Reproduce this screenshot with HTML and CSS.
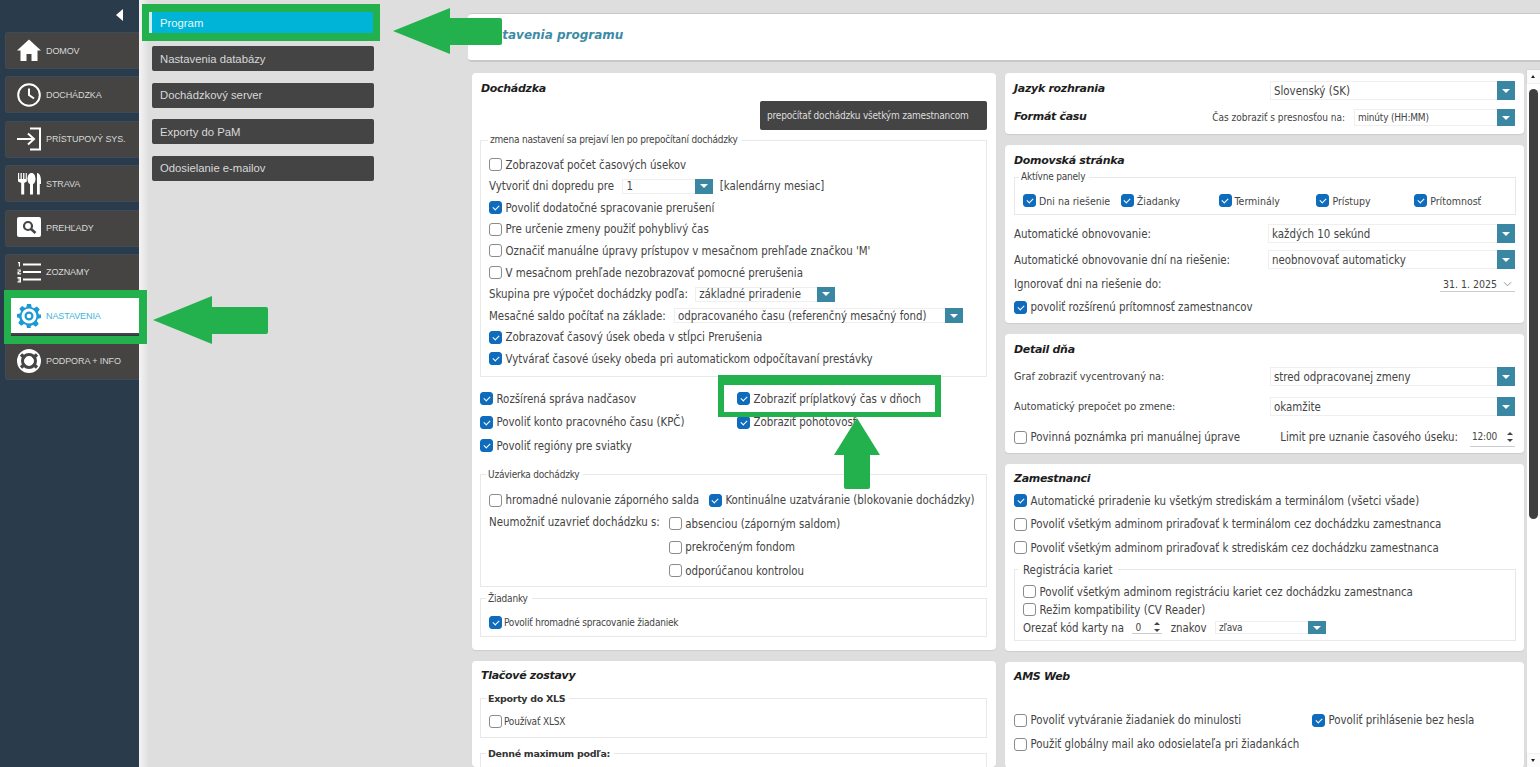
FILE: index.html
```html
<!DOCTYPE html>
<html lang="sk">
<head>
<meta charset="utf-8">
<title>Nastavenia programu</title>
<link rel="stylesheet" href="styles.css">
</head>
<body>
<div class="app">
  <aside class="sidebar">
    <div class="collapse"><span class="collapse-tri"></span></div>
    <nav class="nav">
      <a class="nav-item"><svg class="ico" viewBox="0 0 24 24"><path fill="#fff" d="M12 .5 24 11.5h-3.5V22H14.500v-7h-5v7H3.500V11.500H0z"/></svg><span>DOMOV</span></a>
      <a class="nav-item"><svg class="ico" viewBox="0 0 24 24"><circle cx="12" cy="12" r="10.800" fill="none" stroke="#fff" stroke-width="2"/><path d="M12 5.500V12l5 3.500" fill="none" stroke="#fff" stroke-width="2"/></svg><span>DOCHÁDZKA</span></a>
      <a class="nav-item"><svg class="ico" viewBox="0 0 24 24"><path d="M13 1.500h10v21H13M0 12h16" fill="none" stroke="#fff" stroke-width="2"/><path d="M11 6.500 17 12l-6 5.500" fill="none" stroke="#fff" stroke-width="2"/></svg><span>PRÍSTUPOVÝ SYS.</span></a>
      <a class="nav-item"><svg class="ico" viewBox="0 0 24 24"><path fill="#fff" d="M1 1h1.200v6h1.300V1h1.300v6h1.300V1h1.300v6h1.300V1H9.800v8.500L7.200 11v11.500h-3V11L1 9.500zM14.500 1c2.500 0 4 2.600 4 6 0 2.700-1 4.500-2.500 5v10.500h-3V12c-1.500-.5-2.500-2.300-2.500-5 0-3.400 1.500-6 4-6zM20 1c2.500 0 4 3 4 8v3h-1.200v10.500H20z"/></svg><span>STRAVA</span></a>
      <a class="nav-item"><svg class="ico" viewBox="0 0 24 24"><rect y="1" width="24" height="20" rx="2" fill="#fff"/><circle cx="11" cy="10" r="4" fill="none" stroke="#454545" stroke-width="2.200"/><path d="m14 13 4.500 4" stroke="#454545" stroke-width="2.600"/></svg><span>PREHĽADY</span></a>
      <a class="nav-item"><svg class="ico" viewBox="0 0 24 24"><path d="M6 4.500h18M6 12h18M6 19.500h18" stroke="#fff" stroke-width="2"/><path d="M1 2h2v4.500H1.800V3.200H1zM.5 9.500h3.200v2.800H2v1H4v1.200H.5V11.500h2v-1H.5zM.5 17h3.500v5.500H.5v-1.200h2.200v-.8H1.200v-1h1.500v-.8H.5z" fill="#fff"/></svg><span>ZOZNAMY</span></a>
      <a class="nav-item active"><svg class="ico" viewBox="0 0 24 24"><path fill="#1b9ad6" fill-rule="evenodd" d="M10 0h4l.7 3.300 2.300 1 2.900-1.800 2.800 2.800-1.800 2.900 1 2.300L24 10.500v3.500l-3.100.7-1 2.300 1.800 2.900-2.800 2.800-2.900-1.800-2.300 1L13.800 24h-3.800l-.7-3.100-2.300-1-2.900 1.800-2.800-2.800L3.100 16l-1-2.300L0 13.500v-3.500l3.100-.5 1-2.300L2.300 4.800l2.800-2.800L8 3.800l1.300-.5zm2 4.500a7.500 7.500 0 1 0 0 15 7.500 7.500 0 0 0 0-15z"/><circle cx="12" cy="12" r="3.400" fill="none" stroke="#1b9ad6" stroke-width="2.200"/></svg><span>NASTAVENIA</span></a>
      <a class="nav-item"><svg class="ico" viewBox="0 0 24 24"><circle cx="12" cy="12" r="12" fill="#fff"/><circle cx="12" cy="12" r="6.500" fill="none" stroke="#454545" stroke-width="3"/><path d="M4 5.500 8 9M20 5.500 16 9M4 18.500 8 15M20 18.500 16 15" stroke="#454545" stroke-width="3.500"/><circle cx="12" cy="12" r="3" fill="#fff"/></svg><span>PODPORA + INFO</span></a>
    </nav>
  </aside>

  <div class="submenu">
    <a class="sub-item current">Program</a>
    <a class="sub-item">Nastavenia databázy</a>
    <a class="sub-item">Dochádzkový server</a>
    <a class="sub-item">Exporty do PaM</a>
    <a class="sub-item">Odosielanie e-mailov</a>
  </div>

  <main class="main">
    <header class="title-bar"><h1>Nastavenia programu</h1></header>
    <div class="content">
      <div class="col col-left">
        <section class="card card-doch">
          <h2>Dochádzka</h2>
          <div class="btn-row"><button class="btn">prepočítať dochádzku všetkým zamestnancom</button></div>
          <fieldset class="fs fs-calc">
            <legend class="small">zmena nastavení sa prejaví len po prepočítaní dochádzky</legend>
            <label class="row"><input type="checkbox">Zobrazovať počet časových úsekov</label>
            <div class="row">Vytvoriť dni dopredu pre <div class="sel sel-days"><span>1</span><i></i></div> [kalendárny mesiac]</div>
            <label class="row"><input type="checkbox" checked>Povoliť dodatočné spracovanie prerušení</label>
            <label class="row"><input type="checkbox">Pre určenie zmeny použiť pohyblivý čas</label>
            <label class="row"><input type="checkbox">Označiť manuálne úpravy prístupov v mesačnom prehľade značkou 'M'</label>
            <label class="row"><input type="checkbox">V mesačnom prehľade nezobrazovať pomocné prerušenia</label>
            <div class="row">Skupina pre výpočet dochádzky podľa: <div class="sel sel-group"><span>základné priradenie</span><i></i></div></div>
            <div class="row">Mesačné saldo počítať na základe: <div class="sel sel-saldo"><span>odpracovaného času (referenčný mesačný fond)</span><i></i></div></div>
            <label class="row"><input type="checkbox" checked>Zobrazovať časový úsek obeda v stĺpci Prerušenia</label>
            <label class="row"><input type="checkbox" checked>Vytvárať časové úseky obeda pri automatickom odpočítavaní prestávky</label>
          </fieldset>
          <div class="opts">
            <label class="row"><input type="checkbox" checked>Rozšírená správa nadčasov</label>
            <label class="row"><input type="checkbox" checked>Zobraziť príplatkový čas v dňoch</label>
            <label class="row"><input type="checkbox" checked>Povoliť konto pracovného času (KPČ)</label>
            <label class="row"><input type="checkbox" checked>Zobraziť pohotovosť</label>
            <label class="row"><input type="checkbox" checked>Povoliť regióny pre sviatky</label>
          </div>
          <fieldset class="fs fs-close">
            <legend class="small">Uzávierka dochádzky</legend>
            <div class="row-close">
              <label class="row"><input type="checkbox">hromadné nulovanie záporného salda</label>
              <label class="row"><input type="checkbox" checked>Kontinuálne uzatváranie (blokovanie dochádzky)</label>
            </div>
            <div class="deny">
              <span class="deny-label">Neumožniť uzavrieť dochádzku s:</span>
              <div class="deny-list">
                <label class="row"><input type="checkbox">absenciou (záporným saldom)</label>
                <label class="row"><input type="checkbox">prekročeným fondom</label>
                <label class="row"><input type="checkbox">odporúčanou kontrolou</label>
              </div>
            </div>
          </fieldset>
          <fieldset class="fs fs-req">
            <legend class="small">Žiadanky</legend>
            <label class="row small"><input type="checkbox" checked>Povoliť hromadné spracovanie žiadaniek</label>
          </fieldset>
        </section>
        <section class="card card-print">
          <h2>Tlačové zostavy</h2>
          <fieldset class="fs fs-xls">
            <legend class="bold-legend">Exporty do XLS</legend>
            <label class="row small"><input type="checkbox">Používať XLSX</label>
          </fieldset>
          <fieldset class="fs fs-max">
            <legend class="bold-legend">Denné maximum podľa:</legend>
          </fieldset>
        </section>
      </div>

      <div class="col col-right">
        <section class="card card-lang">
          <div class="line line-lang"><h2>Jazyk rozhrania</h2><div class="sel sel-lang"><span>Slovenský (SK)</span><i></i></div></div>
          <div class="line line-time"><h2>Formát času</h2><span class="label-time push">Čas zobraziť s presnosťou na:</span><div class="sel sel-time small"><span>minúty (HH:MM)</span><i></i></div></div>
        </section>
        <section class="card card-home">
          <h2>Domovská stránka</h2>
          <fieldset class="fs fs-panels">
            <legend class="small">Aktívne panely</legend>
            <div class="panels">
              <label class="row"><input type="checkbox" checked>Dni na riešenie</label>
              <label class="row"><input type="checkbox" checked>Žiadanky</label>
              <label class="row"><input type="checkbox" checked>Terminály</label>
              <label class="row"><input type="checkbox" checked>Prístupy</label>
              <label class="row"><input type="checkbox" checked>Prítomnosť</label>
            </div>
          </fieldset>
          <div class="line line-a"><span>Automatické obnovovanie:</span><div class="sel sel-auto"><span>každých 10 sekúnd</span><i></i></div></div>
          <div class="line line-a"><span>Automatické obnovovanie dní na riešenie:</span><div class="sel sel-auto"><span>neobnovovať automaticky</span><i></i></div></div>
          <div class="line line-d"><span>Ignorovať dni na riešenie do:</span><div class="date"><span>31. 1. 2025</span><svg viewBox="0 0 10 6"><path d="M1 1l4 4 4-4" fill="none" stroke="#888"/></svg></div></div>
          <label class="row"><input type="checkbox" checked>povoliť rozšírenú prítomnosť zamestnancov</label>
        </section>
        <section class="card card-day">
          <h2>Detail dňa</h2>
          <div class="line line-b"><span class="label-day">Graf zobraziť vycentrovaný na:</span><div class="sel sel-lang"><span>stred odpracovanej zmeny</span><i></i></div></div>
          <div class="line line-b"><span class="label-day">Automatický prepočet po zmene:</span><div class="sel sel-lang"><span>okamžite</span><i></i></div></div>
          <div class="line line-c"><label class="row"><input type="checkbox">Povinná poznámka pri manuálnej úprave</label><span class="push">Limit pre uznanie časového úseku:</span><div class="spin spin-time small"><span>12:00</span><b></b></div></div>
        </section>
        <section class="card card-emp">
          <h2>Zamestnanci</h2>
          <label class="row"><input type="checkbox" checked>Automatické priradenie ku všetkým strediskám a terminálom (všetci všade)</label>
          <label class="row"><input type="checkbox">Povoliť všetkým adminom priraďovať k terminálom cez dochádzku zamestnanca</label>
          <label class="row"><input type="checkbox">Povoliť všetkým adminom priraďovať k strediskám cez dochádzku zamestnanca</label>
          <fieldset class="fs fs-cards">
            <legend>Registrácia kariet</legend>
            <label class="row"><input type="checkbox">Povoliť všetkým adminom registráciu kariet cez dochádzku zamestnanca</label>
            <label class="row"><input type="checkbox">Režim kompatibility (CV Reader)</label>
            <div class="row">Orezať kód karty na <div class="spin spin-num small"><span>0</span><b></b></div> znakov <div class="sel sel-side small"><span>zľava</span><i></i></div></div>
          </fieldset>
        </section>
        <section class="card card-ams">
          <h2>AMS Web</h2>
          <div class="ams-grid">
            <label class="row"><input type="checkbox">Povoliť vytváranie žiadaniek do minulosti</label>
            <label class="row"><input type="checkbox" checked>Povoliť prihlásenie bez hesla</label>
            <label class="row"><input type="checkbox">Použiť globálny mail ako odosielateľa pri žiadankách</label>
          </div>
        </section>
      </div>

      <div class="scrollbar">
        <span class="sb-btn up"></span>
        <span class="sb-track"><span class="sb-thumb"></span></span>
        <span class="sb-btn down"></span>
      </div>
    </div>
  </main>

  <div class="hl hl-program"></div>
  <div class="hl hl-settings"></div>
  <div class="hl hl-option"></div>
  <svg class="arrow arrow-a" viewBox="0 0 110 48"><path d="M1 24 58 1v10h50q2 0 2 2v23q0 2-2 2H58v9z"/></svg>
  <svg class="arrow arrow-b" viewBox="0 0 116 50"><path d="M1 25 60 1v11h54q2 0 2 2v23q0 2-2 2H60v10z"/></svg>
  <svg class="arrow arrow-c" viewBox="0 0 48 72"><path d="M24 1 47 38H37v32q0 2-2 2H13q-2 0-2-2V38H1z"/></svg>
</div>
</body>
</html>
```

FILE: styles.css
```css
* { box-sizing: border-box; }
html, body { margin: 0; height: 100%; overflow: hidden; }
body { font: 11.400px "DejaVu Sans Condensed", "DejaVu Sans", sans-serif; color: #444; background: #dedede; }
a { display: flex; }
.app { position: relative; display: flex; width: 1540px; height: 767px; overflow: hidden; }

/* sidebar */
.sidebar { width: 139px; flex: none; background: #2a3b4b; padding-left: 5px; }
.collapse { height: 32px; display: flex; justify-content: flex-end; padding: 9px 16px 0 0; }
.collapse-tri { width: 0; height: 0; border-style: solid; border-width: 6px 7px 6px 0; border-color: transparent #fff transparent transparent; }
.nav { display: flex; flex-direction: column; gap: 7.400px; }
.nav-item { height: 37px; align-items: center; gap: 5px; padding-left: 11px; background: #454443; border: 1px solid #3c4c5a; border-right: 0; border-radius: 3px 0 0 3px; font: 9px "Liberation Sans", sans-serif; letter-spacing: -.1px; color: #d8d8d8; }
.nav-item.active { background: #fff; color: #3fb3dc; border: 0; border-bottom: 2px solid #444; border-radius: 0; padding-left: 12px; }
.ico { width: 24px; height: 24px; flex: none; }

/* submenu */
.submenu { width: 329px; flex: none; padding: 12px 0 0 13px; display: flex; flex-direction: column; gap: 11.400px; background: linear-gradient(90deg, #f4f4f4, #dedede 10px); font: 11.300px "Liberation Sans", sans-serif; }
.sub-item { width: 222px; height: 25px; align-items: center; padding-left: 8px; background: #444; color: #d8d8d8; border-radius: 2px; }
.sub-item.current { height: 22px; margin-left: -3px; width: 224px; padding-left: 8px; background: #00b4d8; border-left: 3px solid #cdeef5; border-radius: 0; color: #e8f8fb; margin-bottom: 1px; }

/* main */
.main { flex: 1; min-width: 0; padding-top: 13px; }
.title-bar { height: 49px; background: #fff; border-top: 1px solid #c8c8c8; border-bottom: 2px solid #c8c8c8; border-radius: 4px 0 0 4px; padding: 14px 0 0 9px; }
h1 { margin: 0; font: italic bold 12px "DejaVu Sans", sans-serif; color: #3d8ba6; }
.content { display: flex; padding: 11px 0 0 4px; align-items: flex-start; }
.col { flex: none; display: flex; flex-direction: column; gap: 11px; }
.col-left { width: 524px; }
.col-right { width: 519px; margin-left: 9px; }
.card { background: #fff; border-radius: 4px; padding: 8px 9px 0 8px; box-shadow: 0 1px 1px #ccc; }
.col-right .card { padding-left: 9px; }
h2 { margin: 0; padding-left: 1px; font: italic bold 11px "DejaVu Sans", sans-serif; letter-spacing: -.3px; color: #1d1d1d; height: 14px; line-height: 14px; }
.col-right h2 { padding-left: 0; }

/* form bits */
.row { display: flex; align-items: center; height: 21.550px; white-space: pre; }
input[type=checkbox] { appearance: none; width: 13px; height: 13px; margin: 0 3.500px 0 0; flex: none; border: 1px solid #8b8b8b; border-radius: 3px; background: #fff; position: relative; }
input[type=checkbox]:checked { background: #0f6cbd; border-color: #0f6cbd; }
input[type=checkbox]:checked::after { content: ""; position: absolute; left: 3.500px; top: 2px; width: 3px; height: 5px; border: solid #fff; border-width: 0 1.300px 1.300px 0; transform: rotate(45deg); }
.small { font-size: 10px; letter-spacing: -.2px; }
.small input[type=checkbox] { margin-right: 2px; }
.label-time { font-size: 10px; }
.label-day { font-size: 10.800px; }
.fs { margin: 0; border: 1px solid #e8e8e8; padding: 0 8px; min-width: 0; }
legend { padding: 0 4px 0 2px; line-height: 14px; }
.fs-close legend, .fs-req legend, .fs-xls legend, .fs-max legend { margin-left: -3px; }
.fs-calc legend { margin-left: -1px; }
.fs-panels legend { margin-left: -4px; }
.bold-legend { font: bold 9.500px "DejaVu Sans", sans-serif; color: #333; letter-spacing: -.3px; }
.sel { display: flex; height: 15px; align-items: center; background: #fff; border: 1px solid #efefef; border-right: 0; padding-left: 3px; margin: 0 3px; white-space: pre; }
.sel span { flex: 1; overflow: hidden; }
.sel i { width: 18px; align-self: stretch; margin: -1px 0; background: #3a87a3; position: relative; flex: none; }
.sel i::after { content: ""; position: absolute; left: 5px; top: calc(50% - 2px); border-style: solid; border-width: 4px 4px 0; border-color: #fff transparent transparent; }
.sel-days { width: 91px; margin-left: 5px; }
.sel-group { width: 140px; margin-left: 4px; }
.sel-saldo { width: 289px; margin-left: 5px; }
.spin { display: flex; align-items: center; border-bottom: 1px solid #ccc; }
.spin span { flex: 1; }
.spin b { width: 9px; height: 14px; position: relative; flex: none; }
.spin b::before, .spin b::after { content: ""; position: absolute; left: 1px; border-style: solid; border-color: #444 transparent; }
.spin b::before { top: 2px; border-width: 0 3px 3px; }
.spin b::after { bottom: 2px; border-width: 3px 3px 0; }

/* left col */
.card-doch { height: 577px; padding-top: 9px; }
.btn-row { display: flex; justify-content: flex-end; margin-top: 5px; }
.btn { width: 227px; height: 29px; border: 0; padding: 0 0 0 7px; text-align: left; background: #444; color: #ddd; border-radius: 2px; font: 10px "DejaVu Sans Condensed", sans-serif; letter-spacing: -.2px; }
.fs-calc { margin-top: 3px; height: 244px; padding-top: 7px; }
.opts { display: grid; grid-template-columns: 257px 1fr; grid-auto-rows: 23.500px; margin-top: 10px; }
.opts .row { height: 23.500px; }
.fs-close { margin-top: 10px; height: 119px; padding-top: 7px; }
.row-close { display: flex; gap: 10px; }
.row-close .row { height: 23.500px; }
.deny { display: flex; }
.deny-label { margin: 3px 9px 0 0; }
.deny-list .row { height: 23.500px; }
.fs-req { margin-top: 5px; height: 45px; padding-top: 6px; }
.fs-req .row, .fs-xls .row { height: 21px; }
.card-print { height: 106px; overflow: hidden; }
.fs-xls { margin-top: 10px; height: 45px; padding-top: 7px; }
.fs-max { margin-top: 10px; height: 60px; }

/* right col */
.line { display: flex; align-items: center; }
.line-lang { height: 19px; }
.line-lang h2 { flex: none; margin-bottom: 4px; }
.line-time h2 { flex: none; margin-bottom: 2px; }
.line-time { height: 17px; margin-top: 9px; }
.push { margin-left: auto; }
.card-lang { height: 61px; }
.card-lang .sel, .line-b .sel { margin: 0 0 0 auto; height: 19px; }
.sel-lang { width: 245px; }
.sel-time { width: 161px; height: 17px !important; margin-left: 9px !important; }
.sel-auto { width: 247px; margin: 0 0 0 auto; height: 19px; padding-left: 3px; }
.card-home { height: 178px; padding-top: 9px; }
.fs-panels { margin: 2px -1px 0 0; height: 45px; padding: 6px 0 0 8px; }
.panels { display: grid; grid-template-columns: repeat(5, 97.800px); font-size: 10.500px; }
.panels input { margin-right: 3px; }
.line-a { height: 19px; margin-top: 9px; }
.line-a + .line-a { margin-top: 7px; }
.line-d { height: 16px; margin-top: 7px; }
.date { display: flex; align-items: center; justify-content: space-between; width: 75px; height: 15px; margin-left: auto; padding: 0 3px; border-bottom: 1px solid #ccc; font-size: 10.500px; }
.date svg { width: 9px; height: 6px; }
.card-home > .row { height: 24px; margin-top: 3px; }
.card-day { height: 119px; padding-top: 9px; }
.line-b { height: 19px; margin-top: 10px; }
.line-b + .line-b { margin-top: 11px; }
.line-c { height: 20px; margin-top: 11px; }
.spin-time { width: 45px; height: 19px; margin-left: 12px; padding-left: 2px; }
.card-emp { height: 187px; }
.card-emp > .row { height: 23.500px; }
.card-emp > h2 + .row { margin-top: 3px; }
.fs-cards { margin: 3px -1px 0 0; height: 78px; padding: 6px 8px 0 8px; }
.fs-cards legend { padding: 0 5px; margin-left: -5px; }
.fs-cards .row { height: 18px; }
.spin-num { width: 30px; height: 12px; margin: 0 5px; padding-left: 3px; }
.sel-side { width: 111px; margin-left: 5px; height: 13px; }
.card-ams { height: 106px; }
.ams-grid { display: grid; grid-template-columns: 298px 1fr; grid-auto-rows: 24px; margin-top: 24px; }
.ams-grid .row { height: 24px; }

/* scrollbar */
.scrollbar { width: 13px; height: 697px; flex: none; margin: -3px 0 0 3px; display: flex; flex-direction: column; background: #fff; }
.sb-btn { height: 13px; flex: none; background: #fbfbfb; position: relative; box-shadow: 0 0 1px #aaa; }
.sb-btn::after { content: ""; position: absolute; left: 4px; top: 5px; border-style: solid; border-color: #222 transparent; }
.up::after { border-width: 0 2.500px 3px; }
.down::after { border-width: 3px 2.500px 0; }
.sb-track { flex: 1; padding: 6px 2px 0; }
.sb-thumb { display: block; width: 9px; height: 430px; background: #3f3f3f; border-radius: 5px; }

/* highlights lying over the page */
.hl { position: absolute; border: solid #22b14c; }
.hl-program { left: 142px; top: 4px; width: 238px; height: 37px; border-width: 8px 7px; }
.hl-settings { left: 4px; top: 290px; width: 143px; height: 54px; border-width: 8px 8px 8px 7px; }
.hl-option { left: 718px; top: 375px; width: 223px; height: 42px; border-width: 10px 6px 5px; }
.arrow { position: absolute; fill: #22b14c; }
.arrow-a { left: 392px; top: 7px; width: 110px; height: 48px; }
.arrow-b { left: 152px; top: 295px; width: 116px; height: 50px; }
.arrow-c { left: 833px; top: 417px; width: 48px; height: 72px; }
```
